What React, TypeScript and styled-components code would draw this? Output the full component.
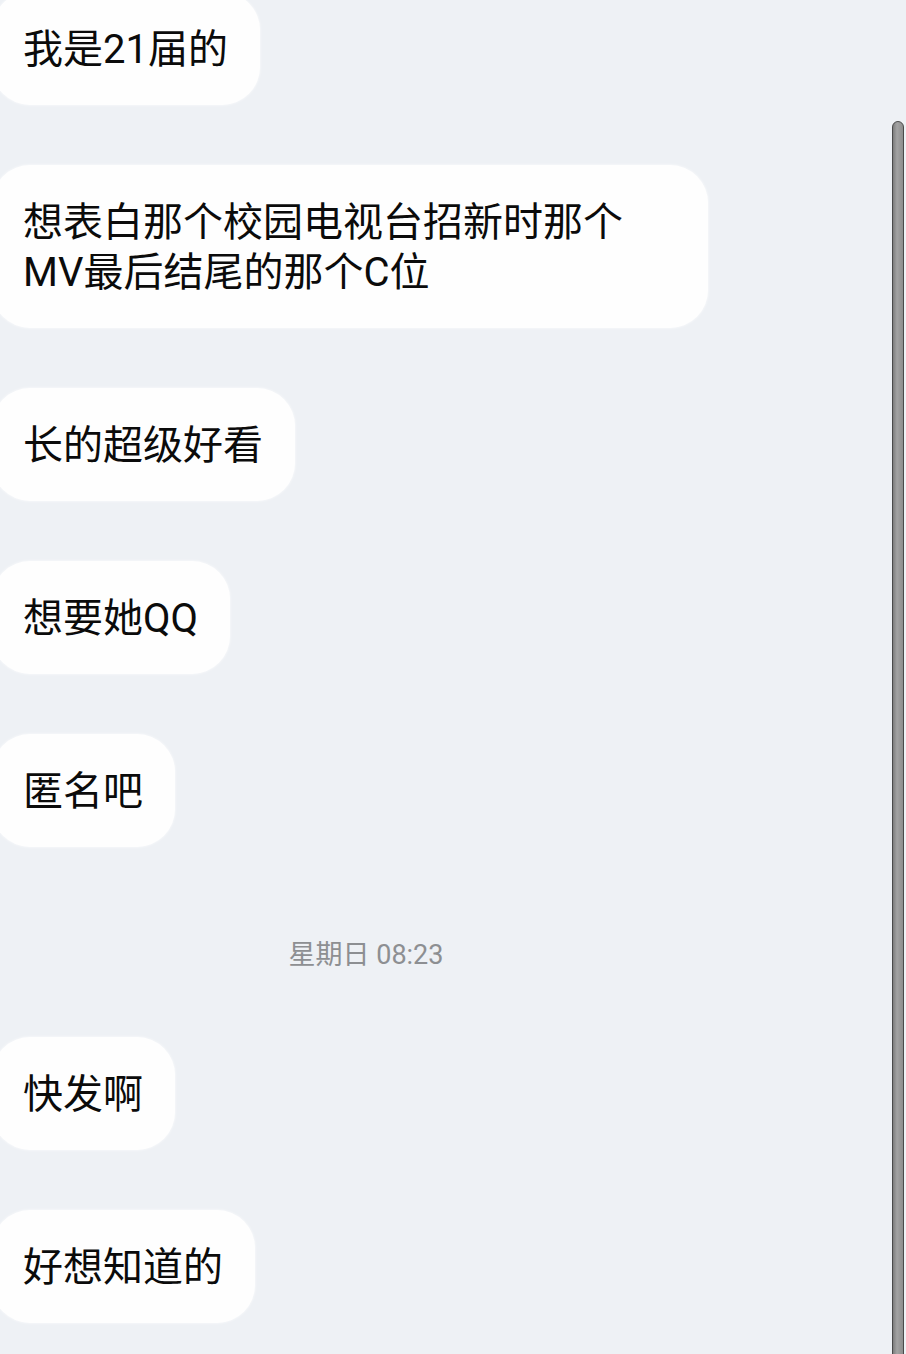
import React from "react";
import styled, { createGlobalStyle } from "styled-components";

const GlobalStyle = createGlobalStyle`
  html, body {
    margin: 0;
    padding: 0;
    background: #eef1f5;
  }
  body {
    font-family: "Roboto", "Noto Sans CJK SC", sans-serif;
    overflow: hidden;
  }
`;

type Item =
  | { kind: "msg"; lines: string[]; width?: number }
  | { kind: "time"; text: string };

const items: Item[] = [
  { kind: "msg", lines: ["我是21届的"] },
  {
    kind: "msg",
    lines: ["想表白那个校园电视台招新时那个", "MV最后结尾的那个C位"],
    width: 716,
  },
  { kind: "msg", lines: ["长的超级好看"] },
  { kind: "msg", lines: ["想要她QQ"] },
  { kind: "msg", lines: ["匿名吧"] },
  { kind: "time", text: "星期日 08:23" },
  { kind: "msg", lines: ["快发啊"] },
  { kind: "msg", lines: ["好想知道的"] },
];

const App = () => {
  return (
    <>
      <GlobalStyle />
      <Screen>
        <Chat>
          {items.map((item, i) =>
            item.kind === "time" ? (
              <TimeRow key={i}>{item.text}</TimeRow>
            ) : (
              <Bubble key={i} $width={item.width}>
                {item.lines.map((l, j) => (
                  <Line key={j}>{l}</Line>
                ))}
              </Bubble>
            )
          )}
        </Chat>
        <ScrollThumb />
      </Screen>
    </>
  );
};

export default App;

const Screen = styled.div`
  position: relative;
  width: 906px;
  height: 1354px;
  background: #eef1f5;
  overflow: hidden;
`;

const Chat = styled.div`
  display: flex;
  flex-direction: column;
  align-items: flex-start;
  gap: 60px;
  margin-top: -8px;
`;

const Bubble = styled.div<{ $width?: number }>`
  margin-left: -8px;
  width: ${(p) => (p.$width ? `${p.$width}px` : "auto")};
  box-sizing: border-box;
  padding: 33px 32px 30px 31px;
  background: #fefefe;
  border-radius: 38px;
  box-shadow: 0 0 3px rgba(255, 255, 255, 0.9);
  color: #0b0b0b;
  font-size: 40px;
  line-height: 50px;
`;

const Line = styled.div`
  white-space: nowrap;
`;

const TimeRow = styled.div`
  width: 732px;
  text-align: center;
  color: #8d8f92;
  font-size: 27px;
  line-height: 30px;
  margin: 33px 0 7px;
`;

const ScrollThumb = styled.div`
  position: absolute;
  left: 892px;
  top: 121px;
  width: 10px;
  bottom: -10px;
  background: linear-gradient(to right, #7d7d7d, #a3a3a3 40%, #8d8d8d);
  border: 1px solid #4a4a4a;
  border-radius: 6px 6px 0 0;
`;
